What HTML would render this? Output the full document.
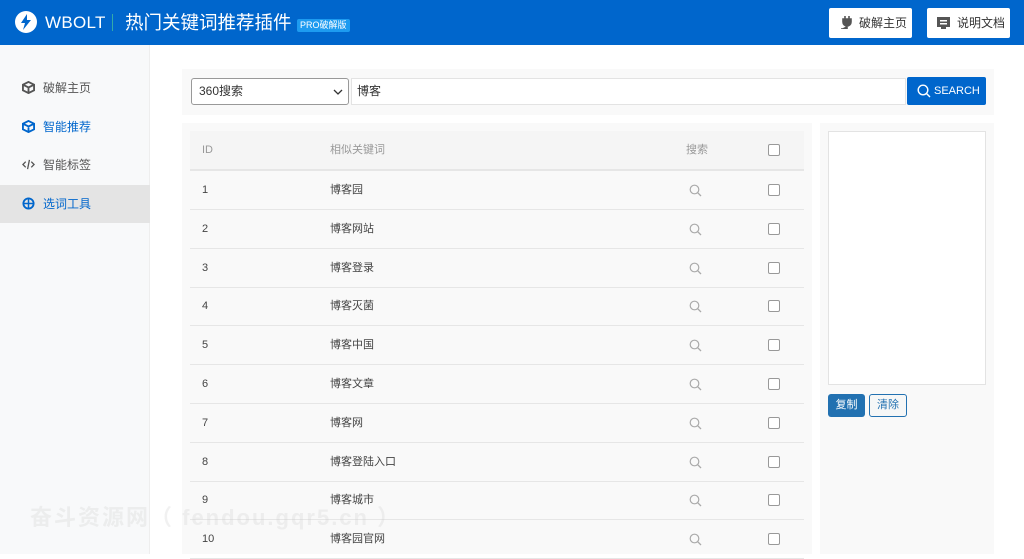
<!DOCTYPE html>
<html><head><meta charset="utf-8"><style>
*{box-sizing:border-box;margin:0;padding:0}
body{width:1024px;height:554px;overflow:hidden;background:#fff;font-family:"Liberation Sans","Noto Sans CJK SC",sans-serif;font-size:12px;color:#333;position:relative}
.hd{position:absolute;left:0;top:0;width:1024px;height:45px;background:#0066cc;color:#fff}
.abs{position:absolute}
.side{position:absolute;left:0;top:45px;width:150px;height:509px;background:#f8f9fa;border-right:1px solid #eee}
.nav{position:absolute;left:0;width:150px;height:38px;line-height:38px;padding-left:43px;font-size:12px;color:#555}
.nav svg{position:absolute;left:22px;top:12px}
.panel{position:absolute;background:#f9f9f9}
.row{position:absolute;left:190px;width:614px;height:39px;border-bottom:1px solid #e6e6e6;line-height:38px;font-size:11px;color:#444}
.row span{position:absolute}
.cb{position:absolute;left:578px;top:13px;width:12px;height:12px;border:1px solid #999;border-radius:2px;background:#fff}
.btn{position:absolute;top:8px;height:30px;background:#fff;border-radius:2px;color:#333;font-size:12px;line-height:30px}
</style></head><body>
<div class="hd">
 <svg class="abs" style="left:15px;top:11px" width="22" height="22" viewBox="0 0 22 22"><circle cx="11" cy="11" r="11" fill="#fff"/><path d="M12 3 L6 12 L10 12 L8 19 L16 9 L12 9 Z" fill="#0066cc"/></svg>
 <div class="abs" style="left:45px;top:13px;font-size:17px;line-height:20px;letter-spacing:.3px">WBOLT</div>
 <div class="abs" style="left:112px;top:14px;width:1px;height:17px;background:#3aa"></div>
 <div class="abs" style="left:125px;top:13px;font-size:18.5px;line-height:20px;white-space:nowrap">热门关键词推荐插件</div>
 <div class="abs" style="left:297px;top:19px;height:13px;padding:0 3px;background:#1d9bf0;border-radius:2px;font-size:9px;line-height:13px">PRO破解版</div>
 <div class="btn" style="left:829px;width:83px;padding-left:30px"><svg class="abs" style="left:11px;top:8px" width="13" height="13" viewBox="0 0 13 13"><path d="M5 0v3M9 0v3M3 3h8v3a4 4 0 0 1-8 0zM7 10v3H1" stroke="#555" stroke-width="1.6" fill="#555"/></svg>破解主页</div>
 <div class="btn" style="left:927px;width:83px;padding-left:30px"><svg class="abs" style="left:10px;top:9px" width="13" height="12" viewBox="0 0 13 12"><rect x="0" y="0" width="13" height="10" fill="#555"/><rect x="3" y="3" width="7" height="1.5" fill="#fff"/><rect x="3" y="6" width="7" height="1.5" fill="#fff"/><rect x="4" y="10" width="5" height="2" fill="#555"/></svg>说明文档</div>
</div>
<div class="side">
 <div class="nav" style="top:24px"><svg width="13" height="13" viewBox="0 0 14 14"><path d="M7 1L13 4V10L7 13L1 10V4Z M1 4L7 7L13 4M7 7V13" fill="none" stroke="#555" stroke-width="2"/></svg>破解主页</div>
 <div class="nav" style="top:63px;color:#0066cc"><svg width="13" height="13" viewBox="0 0 14 14"><path d="M7 1L13 4V10L7 13L1 10V4Z M1 4L7 7L13 4M7 7V13" fill="none" stroke="#0066cc" stroke-width="2"/></svg>智能推荐</div>
 <div class="nav" style="top:101px"><svg width="13" height="13" viewBox="0 0 14 14"><path d="M4 4L1 7L4 10M10 4L13 7L10 10M8 2L6 12" fill="none" stroke="#555" stroke-width="1.4"/></svg>智能标签</div>
 <div class="nav" style="top:140px;background:#e4e4e4;color:#0066cc"><svg width="13" height="13" viewBox="0 0 14 14"><circle cx="7" cy="7" r="5.5" fill="none" stroke="#0066cc" stroke-width="2"/><path d="M7 1V13M1 7H13" stroke="#0066cc" stroke-width="1.6"/></svg>选词工具</div>
</div>
<div class="panel" style="left:182px;top:69px;width:812px;height:46px"></div>
<div class="abs" style="left:191px;top:78px;width:158px;height:27px;border:1px solid #999;border-radius:3px;background:#fff;padding-left:7px;line-height:25px;font-size:12px">360搜索<svg class="abs" style="left:141px;top:10px" width="10" height="6" viewBox="0 0 10 6"><path d="M1 1L5 5L9 1" fill="none" stroke="#333" stroke-width="1.3"/></svg></div>
<div class="abs" style="left:351px;top:78px;width:555px;height:27px;border:1px solid #e3e3e3;background:#fff;padding-left:5px;line-height:25px;font-size:12px">博客</div>
<div class="abs" style="left:907px;top:77px;width:79px;height:28px;background:#0066cc;border-radius:2px;color:#fff;font-size:11px;line-height:28px;padding-left:27px">SEARCH<svg class="abs" style="left:10px;top:7px" width="14" height="14" viewBox="0 0 14 14"><circle cx="6" cy="6" r="4.8" fill="none" stroke="#fff" stroke-width="1.4"/><path d="M9.5 9.5L13 13" stroke="#fff" stroke-width="1.4"/></svg></div>
<div class="panel" style="left:182px;top:123px;width:630px;height:431px"></div>
<div class="panel" style="left:820px;top:123px;width:174px;height:431px"></div>
<div class="abs" style="left:828px;top:131px;width:158px;height:254px;background:#fff;border:1px solid #e3e3e3"></div>
<div class="abs" style="left:828px;top:394px;width:37px;height:23px;background:#2271b1;border-radius:3px;color:#fff;text-align:center;line-height:23px;font-size:11px">复制</div>
<div class="abs" style="left:869px;top:394px;width:38px;height:23px;background:#f6f7f7;border:1px solid #2271b1;border-radius:3px;color:#2271b1;text-align:center;line-height:21px;font-size:11px">清除</div>
<div class="row" style="top:131px;height:40px;border-bottom:2px solid #e6e6e6;background:#f5f5f5;color:#999"><span style="left:12px">ID</span><span style="left:140px">相似关键词</span><span style="left:496px">搜索</span><div class="cb"></div></div>
<div id="rows"></div>
<script>
var k=["博客园","博客网站","博客登录","博客灭菌","博客中国","博客文章","博客网","博客登陆入口","博客城市","博客园官网"],h="";
for(var i=0;i<10;i++){h+='<div class="row" style="top:'+(171+i*38.8)+'px"><span style="left:12px">'+(i+1)+'</span><span style="left:140px">'+k[i]+'</span><svg style="position:absolute;left:499px;top:13px" width="13" height="13" viewBox="0 0 13 13"><circle cx="5.5" cy="5.5" r="4.3" fill="none" stroke="#aaa" stroke-width="1.2"/><path d="M8.7 8.7L12 12" stroke="#aaa" stroke-width="1.3"/></svg><div class="cb"></div></div>';}
document.getElementById("rows").innerHTML=h;
</script>
<div class="abs" style="left:30px;top:500px;font-size:22px;font-weight:bold;color:rgba(210,210,210,.3);letter-spacing:2px;white-space:nowrap">奋斗资源网（ fendou.gqr5.cn ）</div>
</body></html>
